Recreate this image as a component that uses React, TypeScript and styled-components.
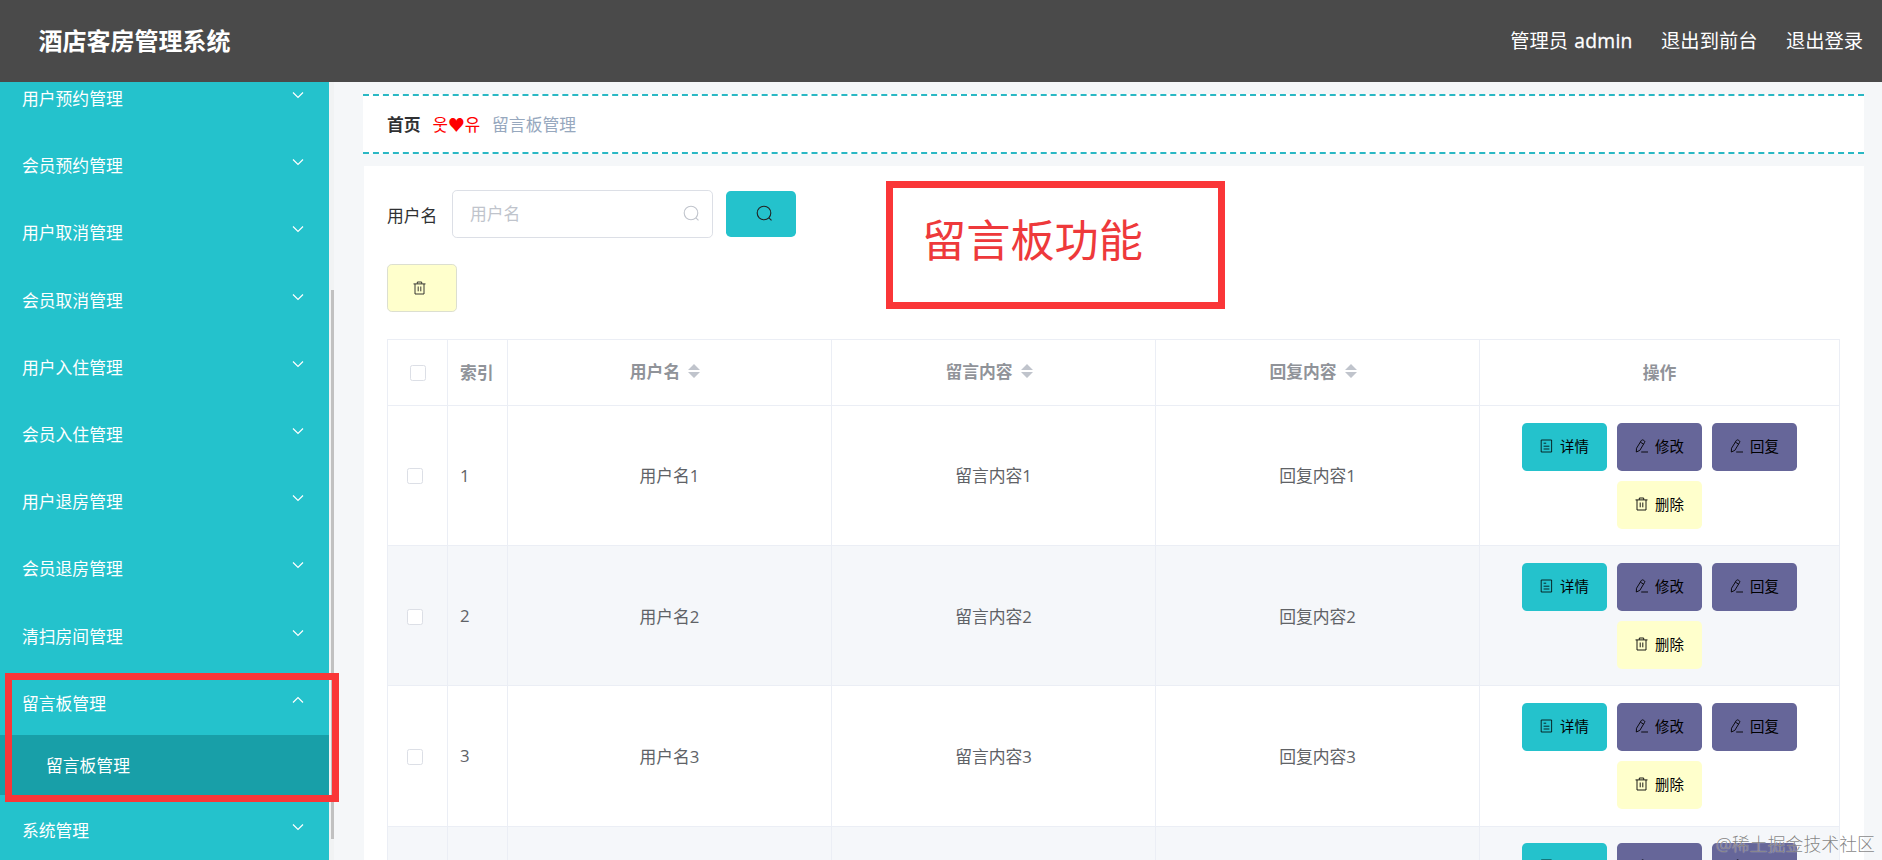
import React from "react";
import styled, { createGlobalStyle } from "styled-components";

const Global = createGlobalStyle`
  * { box-sizing: border-box; }
  body {
    margin: 0;
    background: #f5f7f9;
    font-family: "Open Sans", "Noto Sans CJK SC", sans-serif;
    font-size: 16.8px;
    overflow: hidden;
  }
`;

const Page = styled.div`
  position: relative;
  display: flex;
  flex-direction: column;
  width: 1882px;
  height: 860px;
  overflow: hidden;
`;

const Header = styled.header`
  flex: none;
  display: flex;
  align-items: center;
  justify-content: space-between;
  height: 82px;
  padding: 0 19px 0 38.5px;
  background: #4a4a4a;
  color: #fff;
`;

const Title = styled.h1`
  margin: 0;
  font-size: 24px;
  line-height: 32px;
  font-weight: 700;
`;

const UserLinks = styled.nav`
  display: flex;
  gap: 28.4px;
  font-size: 19.3px;
  line-height: 28px;
`;

const UserName = styled.span`
  display: flex;
  gap: 6px;
`;

const Login = styled.span`
  letter-spacing: 0.3px;
  -webkit-text-stroke: 0.3px #fff;
`;

const Body = styled.div`
  flex: 1;
  display: flex;
  min-height: 0;
`;

const Sidebar = styled.aside`
  flex: none;
  display: flex;
  width: 334px;
  overflow: hidden;
`;

const Menu = styled.ul`
  list-style: none;
  width: 329px;
  height: 820px;
  margin: -19px 0 0;
  padding: 0;
  background: #24c2cc;
  color: #fff;
`;

const MenuItem = styled.li`
  display: flex;
  justify-content: space-between;
  height: 67.2px;
  padding: 0 24px 0 22px;
  line-height: 72px;
`;

const SubItem = styled.li`
  height: 60px;
  padding-left: 46px;
  line-height: 62px;
  background: #189fa8;
`;

const ChevronIcon = styled.svg<{ $open?: boolean }>`
  width: 14px;
  height: 14px;
  margin-top: 25px;
  transform: ${(p) => (p.$open ? "rotate(180deg)" : "none")};
`;

const ScrollTrack = styled.div`
  width: 5px;
  padding: 208px 0 0 2px;
  background: #f1f3f4;
`;

const ScrollThumb = styled.div`
  width: 3px;
  height: 549px;
  background: #c1c1c1;
`;

const Main = styled.main`
  flex: 1;
  display: flex;
  flex-direction: column;
  gap: 12px;
  min-width: 0;
  padding: 12px 18px 0 29px;
`;

const Breadcrumb = styled.div`
  flex: none;
  display: flex;
  align-items: center;
  gap: 12px;
  height: 60px;
  padding: 0 24px;
  border-top: 2px dashed #2ab8c4;
  border-bottom: 2px dashed #2ab8c4;
  background: #fff;
`;

const Home = styled.strong`
  color: #303133;
`;

const Separator = styled.span`
  width: 47.5px;
  color: #f00;
  font-family: "Noto Sans CJK KR", "DejaVu Sans", sans-serif;
  white-space: nowrap;
`;

const Current = styled.span`
  color: #97a8be;
`;

const Card = styled.section`
  flex: 1;
  min-height: 0;
  margin-left: 1px;
  padding: 24px 25px 0 23px;
  background: #fff;
`;

const SearchForm = styled.div`
  display: flex;
  align-items: center;
  height: 48px;
  color: #303133;
`;

const Label = styled.label`
  width: 65px;
  padding-top: 1px;
`;

const SearchBox = styled.div`
  display: flex;
  align-items: center;
  justify-content: space-between;
  width: 261px;
  height: 48px;
  margin-right: 13px;
  padding: 0 12px 2px 17px;
  border: 1px solid #dcdfe6;
  border-radius: 4.8px;
  color: #c0c4cc;
`;

const IconButton = styled.button<{ $bg: string; $outlined?: boolean }>`
  display: flex;
  align-items: center;
  width: 70px;
  height: ${(p) => (p.$outlined ? 48 : 46)}px;
  padding: ${(p) => (p.$outlined ? "0 0 0 25px" : "0 0 2px 30px")};
  border: ${(p) => (p.$outlined ? "1px solid #dcdfd0" : "0")};
  border-radius: 4.8px;
  background: ${(p) => p.$bg};
  color: #222;
`;

const Toolbar = styled.div`
  margin: 26px 0 27px;
`;

const Table = styled.div`
  width: 1453px;
  border: solid #ebeef5;
  border-width: 1px 0 0 1px;
  color: #606266;
`;

const Row = styled.div<{ $head?: boolean; $striped?: boolean }>`
  display: grid;
  grid-template-columns: 60px 60px 324px 324px 324px 360px;
  height: ${(p) => (p.$head ? "66px" : "140.2px")};
  background: ${(p) => (p.$striped ? "#f5f7fa" : "#fff")};
  color: ${(p) => (p.$head ? "#909399" : "inherit")};
  font-weight: ${(p) => (p.$head ? 700 : 400)};
`;

const Cell = styled.div<{ $left?: number; $sortable?: boolean }>`
  display: flex;
  align-items: center;
  justify-content: ${(p) => (p.$left === undefined ? "center" : "flex-start")};
  gap: 8px;
  padding: 0 ${(p) => (p.$sortable ? 9 : 0)}px ${(p) => (p.$sortable ? 3 : 0.4)}px ${(p) => p.$left ?? 0}px;
  border: solid #ebeef5;
  border-width: 0 1px 1px 0;
`;

const Checkbox = styled.span`
  width: 16px;
  height: 16px;
  margin-top: 2px;
  border: 1px solid #dcdfe6;
  border-radius: 2.4px;
  background: #fff;
`;

const Actions = styled.div`
  display: flex;
  flex-wrap: wrap;
  align-content: flex-start;
  justify-content: center;
  gap: 10px;
  padding: 16.6px 40px 0;
  border: solid #ebeef5;
  border-width: 0 1px 1px 0;
`;

const ActionButton = styled.button<{ $bg: string }>`
  display: flex;
  align-items: center;
  justify-content: center;
  gap: 7px;
  width: 85px;
  height: 48px;
  padding: 0 0 2px;
  border: 0;
  border-radius: 4.8px;
  background: ${(p) => p.$bg};
  color: #000;
  font-family: inherit;
  font-size: 14.4px;
`;

const Callout = styled.div`
  position: absolute;
  top: 181px;
  left: 886px;
  width: 339px;
  height: 128px;
  padding: 21px 29px;
  border: 7px solid #fa3638;
  color: #ee393b;
  font-size: 44.2px;
  line-height: 62px;
  white-space: nowrap;
`;

const MenuHighlight = styled.div`
  position: absolute;
  top: 673px;
  left: 5px;
  width: 334px;
  height: 129px;
  border: 7px solid #fa3638;
`;

const Watermark = styled.div`
  position: absolute;
  right: 7px;
  bottom: 3px;
  color: rgba(90, 90, 90, 0.75);
  font-size: 17.9px;
  line-height: 26px;
  font-weight: 300;
  text-shadow: 0 0 1px #fff;
`;

const Chevron = ({ open }: { open?: boolean }) => (
  <ChevronIcon $open={open} viewBox="0 0 14 14" fill="none" stroke="currentColor" strokeWidth="1.2">
    <path d="M2 4.5 7 9.5 12 4.5" />
  </ChevronIcon>
);

const SearchIcon = () => (
  <svg width="17" height="17" viewBox="0 0 17 17" fill="none" stroke="currentColor" strokeWidth="1.1">
    <circle cx="8" cy="8" r="6.8" />
    <path d="m12.9 12.9 2.6 2.4" />
  </svg>
);

const TrashIcon = () => (
  <svg width="13" height="14" viewBox="0 0 13 14" fill="none" stroke="currentColor" strokeWidth="0.9">
    <path d="M.5 2.9h12M4.3 2.7V1h4.4v1.7M2 3v10h9V3M5.2 5.5v4.8M7.8 5.5v4.8" />
  </svg>
);

const DocIcon = () => (
  <svg width="13" height="14" viewBox="0 0 13 14" fill="none" stroke="currentColor" strokeWidth="0.8">
    <path d="M1.2 1h10.4v12H1.2zM3.6 4.2h2.6M3.6 7.2h5.8M3.6 10h5.8" />
  </svg>
);

const PenIcon = () => (
  <svg width="13" height="14" viewBox="0 0 13 14" fill="none" stroke="currentColor" strokeWidth="0.9">
    <path d="M6.2 1.7c.6-.9 1.3-1 2-.6l.9.5c.8.5.9 1.1.4 2L4.8 11.4 1.3 13l.2-3.7zM5.4 3.2l3.2 1.9M6.2 13H13" />
  </svg>
);

const SortIcon = () => (
  <svg width="12" height="14" viewBox="0 0 12 14" fill="#c0c4cc">
    <path d="M0 6 6 0l6 6zM0 8h12l-6 6z" />
  </svg>
);

const menu = [
  "用户预约管理",
  "会员预约管理",
  "用户取消管理",
  "会员取消管理",
  "用户入住管理",
  "会员入住管理",
  "用户退房管理",
  "会员退房管理",
  "清扫房间管理",
];

const columns = ["用户名", "留言内容", "回复内容"];

const App = () => (
  <Page>
    <Global />
    <Header>
      <Title>酒店客房管理系统</Title>
      <UserLinks>
        <UserName>
          管理员 <Login>admin</Login>
        </UserName>
        <span>退出到前台</span>
        <span>退出登录</span>
      </UserLinks>
    </Header>
    <Body>
      <Sidebar>
        <Menu>
          {menu.map((name) => (
            <MenuItem key={name}>
              {name}
              <Chevron />
            </MenuItem>
          ))}
          <MenuItem>
            留言板管理
            <Chevron open />
          </MenuItem>
          <SubItem>留言板管理</SubItem>
          <MenuItem>
            系统管理
            <Chevron />
          </MenuItem>
        </Menu>
        <ScrollTrack>
          <ScrollThumb />
        </ScrollTrack>
      </Sidebar>
      <Main>
        <Breadcrumb>
          <Home>首页</Home>
          <Separator>웃♥유</Separator>
          <Current>留言板管理</Current>
        </Breadcrumb>
        <Card>
          <SearchForm>
            <Label>用户名</Label>
            <SearchBox>
              <span>用户名</span>
              <SearchIcon />
            </SearchBox>
            <IconButton $bg="#24c2cc" aria-label="搜索">
              <SearchIcon />
            </IconButton>
          </SearchForm>
          <Toolbar>
            <IconButton $bg="#ffffcc" $outlined aria-label="删除">
              <TrashIcon />
            </IconButton>
          </Toolbar>
          <Table>
            <Row $head>
              <Cell $left={21.5}>
                <Checkbox />
              </Cell>
              <Cell $left={12}>索引</Cell>
              {columns.map((name) => (
                <Cell key={name} $sortable>
                  {name}
                  <SortIcon />
                </Cell>
              ))}
              <Cell>操作</Cell>
            </Row>
            {[1, 2, 3, 4].map((n) => (
              <Row key={n} $striped={n % 2 === 0}>
                <Cell $left={19}>
                  <Checkbox />
                </Cell>
                <Cell $left={12}>{n}</Cell>
                {columns.map((name) => (
                  <Cell key={name}>{name + n}</Cell>
                ))}
                <Actions>
                  <ActionButton $bg="#24c2cc">
                    <DocIcon />
                    详情
                  </ActionButton>
                  <ActionButton $bg="#666699">
                    <PenIcon />
                    修改
                  </ActionButton>
                  <ActionButton $bg="#666699">
                    <PenIcon />
                    回复
                  </ActionButton>
                  <ActionButton $bg="#ffffcc">
                    <TrashIcon />
                    删除
                  </ActionButton>
                </Actions>
              </Row>
            ))}
          </Table>
        </Card>
      </Main>
    </Body>
    <MenuHighlight />
    <Callout>留言板功能</Callout>
    <Watermark>@稀土掘金技术社区</Watermark>
  </Page>
);

export default App;
